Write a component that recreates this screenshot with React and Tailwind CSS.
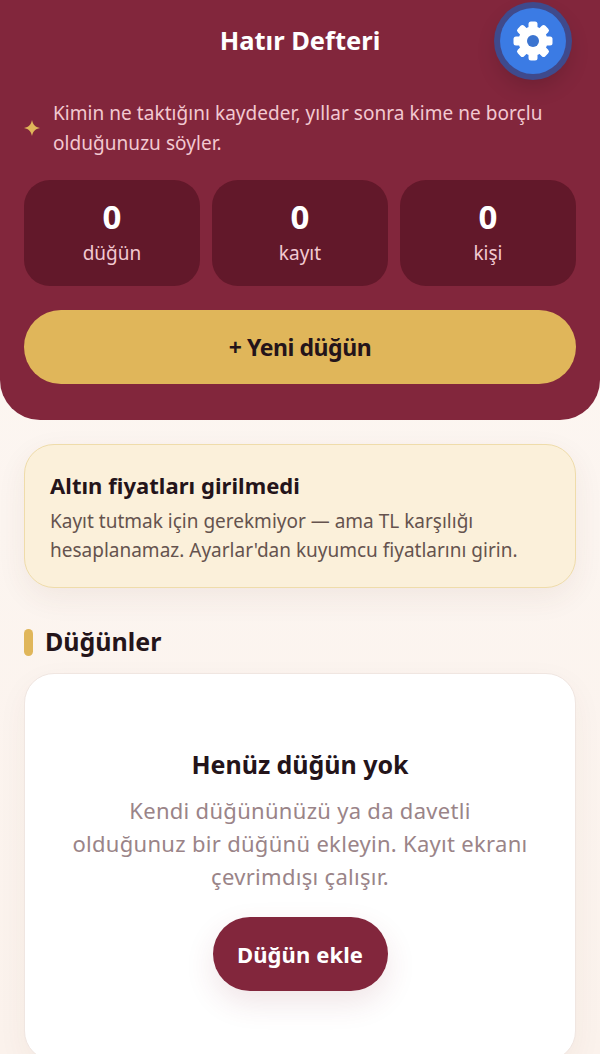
import React from 'react';

const STATS = [
  { value: 0, label: 'düğün' },
  { value: 0, label: 'kayıt' },
  { value: 0, label: 'kişi' },
];

const TEETH = [0, 45, 90, 135, 180, 225, 270, 315];

const GearIcon = () => (
  <svg viewBox="0 0 40 40" className="h-10 w-10">
    <circle cx="20" cy="20" r="14.5" fill="#ffffff" />
    {TEETH.map((angle) => (
      <rect key={angle} x="15.5" y="0.5" width="9" height="10" rx="2.5" fill="#ffffff" transform={`rotate(${angle} 20 20)`} />
    ))}
    <circle cx="20" cy="20" r="6" fill="#3b74d0" />
  </svg>
);

const App = () => {
  return (
    <div className="relative h-[1054px] overflow-hidden bg-gradient-to-b from-[#fdf8f4] to-[#fbf2ec] font-['Noto_Sans',sans-serif] text-[#24141a]">
      {/* Cabecera */}
      <header className="h-[420px] rounded-b-[40px] bg-[#82263c] px-6 pt-6">
        <h1 className="h-8 text-center text-[25.5px] leading-8 font-bold text-white">Hatır Defteri</h1>

        <div className="mt-[42px] flex items-center gap-[13px]">
          <svg viewBox="0 0 16 16" className="h-4 w-4 shrink-0 fill-[#e0b65a]">
            <path d="M8 0 C8.9 4.4 11 7 16 8 C11 9 8.9 11.6 8 16 C7.1 11.6 5 9 0 8 C5 7 7.1 4.4 8 0 Z" />
          </svg>
          <p className="text-[19px] leading-[30px] tracking-[0.05px] text-[#f2c9d1]">
            Kimin ne taktığını kaydeder, yıllar sonra kime ne borçlu olduğunuzu söyler.
          </p>
        </div>

        <div className="mt-[22px] grid grid-cols-3 gap-3">
          {STATS.map((stat) => (
            <div key={stat.label} className="flex h-[106px] flex-col items-center rounded-[26px] bg-[#62182a] pt-[17px]">
              <span className="text-[33px] leading-[40px] font-bold text-white">{stat.value}</span>
              <span className="mt-px text-[19px] leading-[30px] text-[#f2c9d1]">{stat.label}</span>
            </div>
          ))}
        </div>

        <button className="mt-6 h-[74px] w-full rounded-full bg-[#e0b65a] text-[23px] font-bold tracking-[-0.45px] text-[#24141a]">
          + Yeni düğün
        </button>
      </header>

      {/* Botón de ajustes */}
      <button className="absolute top-[8px] left-[500px] flex h-[66px] w-[66px] items-center justify-center rounded-full bg-[#3b7be4] shadow-[0_0_0_6px_#3f4a8c,0_10px_24px_rgba(0,0,0,0.2)]">
        <GearIcon />
      </button>

      <main className="px-6 pt-6">
        <section className="h-[144px] rounded-[30px] border-[1.5px] border-[#efdcaa] bg-[#fbf0da] px-[25px] pt-[22px] shadow-[0_10px_30px_rgba(100,50,40,0.07)]">
          <h2 className="text-[22px] leading-[36px] font-bold tracking-[0.05px]">Altın fiyatları girilmedi</h2>
          <p className="mt-1 text-[19px] leading-[29px] text-[#65534e]">
            Kayıt tutmak için gerekmiyor — ama TL karşılığı hesaplanamaz. Ayarlar'dan kuyumcu fiyatlarını girin.
          </p>
        </section>

        <div className="mt-[36px] flex h-[36px] items-center gap-3">
          <span className="h-[27px] w-[9px] rounded-full bg-[#e0b65a]" />
          <h2 className="text-[25px] font-bold">Düğünler</h2>
        </div>

        <section className="mt-[13px] flex h-[388px] flex-col items-center rounded-[30px] border-[1.5px] border-[#f0e6e1] bg-white px-10 pt-[70px] shadow-[0_10px_30px_rgba(100,50,40,0.05)]">
          <h3 className="text-[25px] leading-[40px] font-bold tracking-[-0.05px]">Henüz düğün yok</h3>
          <p className="mt-[10px] text-center text-[22px] leading-[33px] tracking-[0.3px] text-[#9a8488]">
            Kendi düğününüzü ya da davetli
            <br />
            olduğunuz bir düğünü ekleyin. Kayıt ekranı
            <br />
            çevrimdışı çalışır.
          </p>
          <button className="mt-6 h-[74px] w-[175px] rounded-full bg-[#82263c] text-[22px] font-bold tracking-[0.1px] text-white shadow-[0_12px_30px_rgba(130,38,60,0.12)]">
            Düğün ekle
          </button>
        </section>
      </main>
    </div>
  );
};

export default App;
